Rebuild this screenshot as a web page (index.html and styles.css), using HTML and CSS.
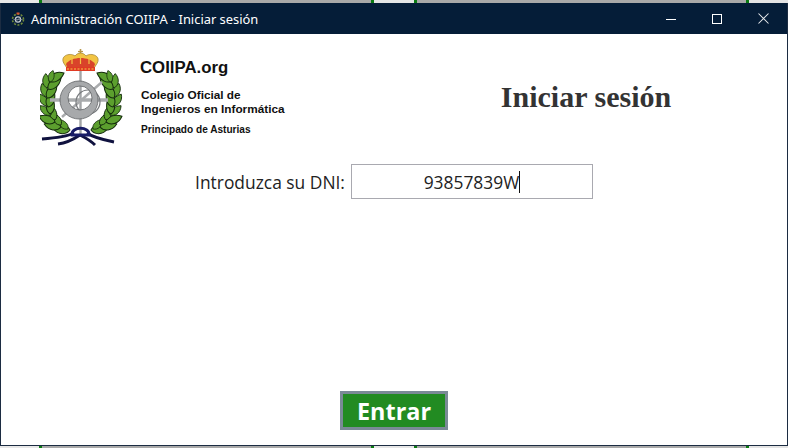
FILE: index.html
```html
<!DOCTYPE html>
<html lang="es">
<head>
<meta charset="utf-8">
<title>Administración COIIPA - Iniciar sesión</title>
<link rel="stylesheet" href="styles.css">
</head>
<body>
<div class="desk-strip">
  <span class="seg seg-a"></span><span class="seg seg-b"></span><span class="seg seg-c"></span><span class="seg seg-d"></span>
</div>
<div class="window">
  <header class="titlebar">
    <svg class="app-icon" width="16" height="16" viewBox="0 0 16 16" aria-hidden="true">
      <circle cx="8" cy="8.500" r="5.500" fill="none" stroke="#6f8a3a" stroke-width="1.600" stroke-dasharray="2 1.500"/>
      <circle cx="8" cy="8.500" r="2.600" fill="none" stroke="#c9ced4" stroke-width="1.200"/>
      <path d="M5 11.500L11 5.500M3.500 8.500H12.500" stroke="#8f979f" stroke-width=".7"/>
      <path d="M6.500 1.500H9.500V3.500H6.500Z" fill="#d8532c"/>
    </svg>
    <span class="title-text">Administración COIIPA - Iniciar sesión</span>
    <div class="controls">
      <span class="ctl"><svg width="10" height="10" viewBox="0 0 10 10"><path d="M0 5.500H10" stroke="#fff"/></svg></span>
      <span class="ctl"><svg width="10" height="10" viewBox="0 0 10 10"><rect x=".5" y=".5" width="9" height="9" fill="none" stroke="#fff"/></svg></span>
      <span class="ctl"><svg width="11" height="11" viewBox="0 0 11 11"><path d="M.5 .5L10.500 10.500M10.500 .5L.5 10.500" stroke="#e8eaec" stroke-width="1.050"/></svg></span>
    </div>
  </header>
  <main class="content">
    <section class="head">
      <div class="logo">
        <svg class="emblem" width="84" height="100" viewBox="40 50 84 100" aria-hidden="true">
          <defs>
            <path id="leaf" d="M0 0C3 -5 11 -6.500 17 0C11 5 3 5 0 0Z" fill="#5c9f2e" stroke="#142c0c" stroke-width="1"/>
            <g id="laurel">
              <use href="#leaf" transform="translate(70 133) rotate(-175)"/>
              <use href="#leaf" transform="translate(68 132) rotate(-135) scale(.8)"/>
              <use href="#leaf" transform="translate(61 130) rotate(-170)"/>
              <use href="#leaf" transform="translate(61 128) rotate(-125) scale(.85)"/>
              <use href="#leaf" transform="translate(55 125) rotate(-160)"/>
              <use href="#leaf" transform="translate(55 123) rotate(-105) scale(.9)"/>
              <use href="#leaf" transform="translate(51 118) rotate(-140) scale(.85)"/>
              <use href="#leaf" transform="translate(50 117) rotate(-85)"/>
              <use href="#leaf" transform="translate(48 109) rotate(-125) scale(.85)"/>
              <use href="#leaf" transform="translate(48 110) rotate(-70)"/>
              <use href="#leaf" transform="translate(47 100) rotate(-110) scale(.85)"/>
              <use href="#leaf" transform="translate(47 101) rotate(-55)"/>
              <use href="#leaf" transform="translate(47 91) rotate(-95) scale(.85)"/>
              <use href="#leaf" transform="translate(48 92) rotate(-40)"/>
              <use href="#leaf" transform="translate(49 84) rotate(-28)"/>
              <use href="#leaf" transform="translate(50 85) rotate(-75) scale(.7)"/>
            </g>
          </defs>
          <use href="#laurel"/>
          <use href="#laurel" transform="translate(161 0) scale(-1 1)"/>
          <path d="M80.500 70V137" stroke="#a3a5a7" stroke-width="2.400"/>
          <path d="M50 103H108" stroke="#a9abad" stroke-width="3.500"/>
          <path d="M62 120L102 85" stroke="#a9abad" stroke-width="2.500"/>
          <ellipse cx="88" cy="105" rx="12" ry="12" fill="none" stroke="#777a7d" stroke-width="1.200"/>
          <path fill-rule="evenodd" d="M60 103A19 19 0 1 1 98 103A19 19 0 1 1 60 103ZM68 101A12 12 0 1 0 92 101A12 12 0 1 0 68 101Z" fill="#a7a9ab" stroke="#5f6265" stroke-width=".8"/>
          <path d="M80.500 52V58" stroke="#b9974a" stroke-width="1.600"/>
          <path d="M78 54.500H83" stroke="#b9974a" stroke-width="1.200"/>
          <path d="M65 68C58 59 70 55 75 59C78 55 83 55 86 59C91 55 103 59 96 68L93 73H68Z" fill="#f2c443" stroke="#9a7a28" stroke-width=".7"/>
          <path d="M66 67C71 59 90 59 95 67L93 73H68Z" fill="#d9432a"/>
          <path d="M72 62V67M80.500 60V67M89 62V67" stroke="#f2c443" stroke-width="1.200"/>
          <path d="M66 70H95V74H66Z" fill="#e03a23"/>
          <path d="M67 72H94" stroke="#f3c84a" stroke-width="1.200" stroke-dasharray="2 1.500"/>
          <path d="M42 142C55 141 66 140 74 136M114 145C104 143 94 141 87 136M80 138C86 141 91 144 95 148M80 138C74 142 66 146 58 147" fill="none" stroke="#10123f" stroke-width="3"/>
          <path d="M72 138C71 129 90 129 89 138Z" fill="none" stroke="#181c66" stroke-width="3"/>
        </svg>
        <div class="logo-text">
          <div class="org">COIIPA.org</div>
          <div class="college">Colegio Oficial de<br>Ingenieros en Informática</div>
          <div class="region">Principado de Asturias</div>
        </div>
      </div>
      <h1 class="heading">Iniciar sesión</h1>
    </section>
    <form class="field">
      <label class="field-label">Introduzca su DNI:</label>
      <div class="input"><span class="input-value">93857839W</span></div>
    </form>
    <button class="submit" type="button">Entrar</button>
  </main>
</div>
<div class="desk-strip desk-strip-bottom">
  <span class="seg seg-a"></span><span class="seg seg-b"></span><span class="seg seg-c"></span><span class="seg seg-d"></span>
</div>
</body>
</html>
```

FILE: styles.css
```css
* {
  box-sizing: border-box;
}

html,
body {
  height: 100%;
}

body {
  margin: 0;
  display: flex;
  flex-direction: column;
  overflow: hidden;
  background: #fff;
  font-family: "Open Sans", "Noto Sans", sans-serif;
}

.desk-strip {
  flex: 0 0 3px;
  display: flex;
  background: #e4e4e4;
}

.desk-strip-bottom {
  flex-basis: 2px;
}

.seg {
  display: block;
  border: 0 solid #0a7a12;
}

.seg-a {
  width: 42px;
  border-right-width: 3px;
  background: #e8e8e8;
}

.seg-b {
  width: 332px;
  border-right-width: 3px;
  background: #a9a9a9;
}

.seg-c {
  width: 40px;
  background: #e6e6e6;
}

.seg-d {
  width: 335px;
  border-width: 0 3px;
  background: #a9a9a9;
}

.window {
  flex: 1;
  min-height: 0;
  display: flex;
  flex-direction: column;
  border: 1px solid #1c2c42;
  border-top: 0;
  background: #fff;
}

.titlebar {
  flex: 0 0 31px;
  display: flex;
  align-items: center;
  padding-left: 9px;
  background: #051d38;
  color: #fff;
}

.app-icon {
  flex: none;
}

.title-text {
  margin-left: 5px;
  font-family: "Noto Sans", "Open Sans", sans-serif;
  font-size: 12.900px;
}

.controls {
  margin-left: auto;
  display: flex;
  align-items: center;
  padding-right: 1px;
}

.ctl {
  width: 46px;
  height: 31px;
  display: flex;
  align-items: center;
  justify-content: center;
}

.content {
  flex: 1;
  min-height: 0;
  display: flex;
  flex-direction: column;
  align-items: center;
  padding-bottom: 15px;
}

.head {
  align-self: stretch;
  display: grid;
  grid-template-columns: 1fr 1fr;
  padding: 13px 19px 0 39px;
}

.logo {
  display: flex;
  align-items: flex-start;
}

.emblem {
  flex: none;
  filter: blur(.35px);
}

.logo-text {
  margin-left: 16px;
  padding-top: 12px;
  font-family: "Liberation Sans", Arial, sans-serif;
  font-weight: 700;
  color: #111;
}

.org {
  font-size: 16.800px;
  line-height: 18px;
}

.college {
  margin: 12px 0 0 1px;
  font-size: 11.800px;
  line-height: 13.500px;
}

.region {
  margin: 8px 0 0 1px;
  font-size: 10.100px;
  line-height: 12px;
}

.heading {
  margin: 32px 0 0;
  text-align: center;
  font-family: "Liberation Serif", "Times New Roman", serif;
  font-size: 30px;
  line-height: 36px;
  font-weight: 700;
  color: #333;
}

.field {
  margin-top: 17px;
  display: flex;
  align-items: center;
  gap: 6px;
}

.field-label {
  font-size: 17.400px;
  color: #222;
}

.input {
  width: 242px;
  height: 35px;
  display: flex;
  align-items: center;
  justify-content: center;
  border: 1px solid #a9a9b0;
  font-size: 17.400px;
  color: #222;
}

.input-value {
  border-right: 1px solid #111;
  line-height: 22px;
}

.submit {
  margin-top: auto;
  width: 108px;
  height: 39px;
  padding: 0;
  border: 3px solid #7a8a96;
  background: #228b22;
  color: #fff;
  font-family: "Open Sans", "Noto Sans", sans-serif;
  font-size: 23.400px;
  line-height: 30px;
  font-weight: 700;
}
```
